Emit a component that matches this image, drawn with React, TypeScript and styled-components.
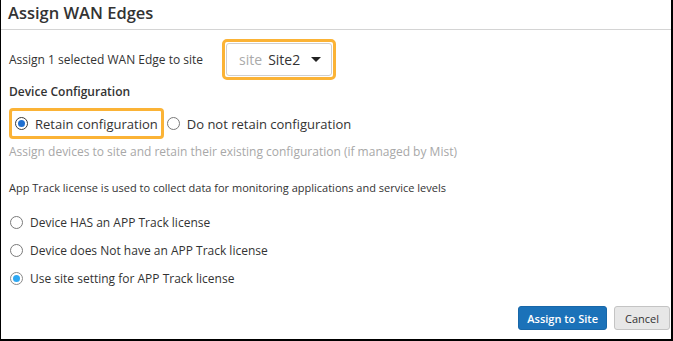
import React from "react";
import styled, { createGlobalStyle } from "styled-components";

const Global = createGlobalStyle`
  html, body { margin: 0; padding: 0; background: #fff; }
  body { font-family: "Open Sans", "Noto Sans", sans-serif; color: #333; }
  * { box-sizing: border-box; }
`;

const Dialog = styled.div`
  width: 673px;
  height: 341px;
  border-left: 1px solid #000;
  border-right: 2px solid #000;
  border-bottom: 2px solid #000;
  display: flex;
  flex-direction: column;
`;

const Header = styled.div`
  height: 30px;
  border-bottom: 1px solid #d4d4d4;
  padding: 3px 0 0 7px;
  font-size: 16.5px;
  font-weight: 600;
  color: #333;
  line-height: 20px;
`;

const Body = styled.div`
  flex: 1;
  padding: 8px 0 0 8px;
  display: flex;
  flex-direction: column;
`;

const SiteRow = styled.div`
  display: flex;
  align-items: center;
  gap: 19px;
  font-size: 12px;
  height: 42px;
`;

const Focus = styled.div`
  border: 3px solid #fbb336;
  border-radius: 5px;
  padding: 1px;
  display: inline-flex;
`;

const Select = styled.div`
  width: 106px;
  height: 33px;
  border: 1px solid #cfcfcf;
  border-radius: 3px;
  display: flex;
  align-items: center;
  padding-left: 12px;
  font-size: 14px;
  color: #333;
`;

const Muted = styled.span`
  color: #aaa;
  margin-right: 6px;
`;

const Caret = styled.span`
  width: 0;
  height: 0;
  border-left: 5px solid transparent;
  border-right: 5px solid transparent;
  border-top: 5px solid #222;
  margin-left: 11px;
`;

const SectionTitle = styled.div`
  font-size: 12px;
  font-weight: 600;
  margin-top: 3px;
  line-height: 18px;
`;

const ConfigRow = styled.div`
  display: flex;
  align-items: center;
  margin-top: 7px;
  height: 31px;
`;

const FocusOption = styled.div`
  border: 3px solid #fbb336;
  border-radius: 4px;
  height: 31px;
  padding: 0 3px 0 3px;
  display: flex;
  align-items: center;
`;

const Option = styled.label<{ $size?: number; $gap?: number }>`
  display: flex;
  align-items: center;
  gap: 7px;
  font-size: ${(p) => p.$size ?? 13}px;
  margin-left: ${(p) => p.$gap ?? 0}px;
  color: #333;
  white-space: nowrap;
`;

const Radio = styled.span<{ $on?: boolean; $tone?: string }>`
  width: 13px;
  height: 13px;
  border-radius: 50%;
  border: 1px solid ${(p) => (p.$on ? (p.$tone === "light" ? "#8a8a8a" : "#3a3a3a") : "#7a7a7a")};
  display: inline-flex;
  align-items: center;
  justify-content: center;
  background: #fff;
  flex: none;
  &::after {
    content: "";
    display: ${(p) => (p.$on ? "block" : "none")};
    width: 7px;
    height: 7px;
    border-radius: 50%;
    background: ${(p) => (p.$tone === "light" ? "#2ea8f2" : "#1f6fd1")};
  }
`;

const Hint = styled.div`
  font-size: 12px;
  color: #a8a8a8;
  margin-top: 4px;
  line-height: 18px;
`;

const Note = styled.div`
  font-size: 11px;
  color: #333;
  margin-top: 18px;
  line-height: 17px;
`;

const LicenseList = styled.div`
  display: flex;
  flex-direction: column;
  gap: 11px;
  margin-top: 18px;
  padding-left: 1px;
`;

const LicenseItem = styled.div`
  height: 17px;
  display: flex;
  align-items: center;
`;

const Footer = styled.div`
  display: flex;
  justify-content: flex-end;
  gap: 7px;
  padding: 0 1px 0 0;
  margin-top: auto;
  margin-bottom: 9px;
`;

const Button = styled.button<{ $primary?: boolean }>`
  height: 24px;
  font-family: "Open Sans", "Noto Sans", sans-serif;
  font-size: 11px;
  border-radius: 3px;
  padding: 0 ${(p) => (p.$primary ? 8 : 10)}px;
  cursor: pointer;
  border: 1px solid ${(p) => (p.$primary ? "#1867a8" : "#c4c4c4")};
  background: ${(p) => (p.$primary ? "#1b72b9" : "#e7e7e7")};
  color: ${(p) => (p.$primary ? "#fff" : "#333")};
  font-weight: ${(p) => (p.$primary ? 600 : 400)};
`;

export default function App() {
  return (
    <>
      <Global />
      <Dialog>
        <Header>Assign WAN Edges</Header>
        <Body>
          <SiteRow>
            <span>Assign 1 selected WAN Edge to site</span>
            <Focus>
              <Select>
                <Muted>site</Muted>
                Site2
                <Caret />
              </Select>
            </Focus>
          </SiteRow>
          <SectionTitle>Device Configuration</SectionTitle>
          <ConfigRow>
            <FocusOption>
              <Option>
                <Radio $on />
                Retain configuration
              </Option>
            </FocusOption>
            <Option $gap={3}>
              <Radio />
              Do not retain configuration
            </Option>
          </ConfigRow>
          <Hint>Assign devices to site and retain their existing configuration (if managed by Mist)</Hint>
          <Note>App Track license is used to collect data for monitoring applications and service levels</Note>
          <LicenseList>
            <LicenseItem>
              <Option $size={12}>
                <Radio />
                Device HAS an APP Track license
              </Option>
            </LicenseItem>
            <LicenseItem>
              <Option $size={12}>
                <Radio />
                Device does Not have an APP Track license
              </Option>
            </LicenseItem>
            <LicenseItem>
              <Option $size={12}>
                <Radio $on $tone="light" />
                Use site setting for APP Track license
              </Option>
            </LicenseItem>
          </LicenseList>
          <Footer>
            <Button $primary>Assign to Site</Button>
            <Button>Cancel</Button>
          </Footer>
        </Body>
      </Dialog>
    </>
  );
}
